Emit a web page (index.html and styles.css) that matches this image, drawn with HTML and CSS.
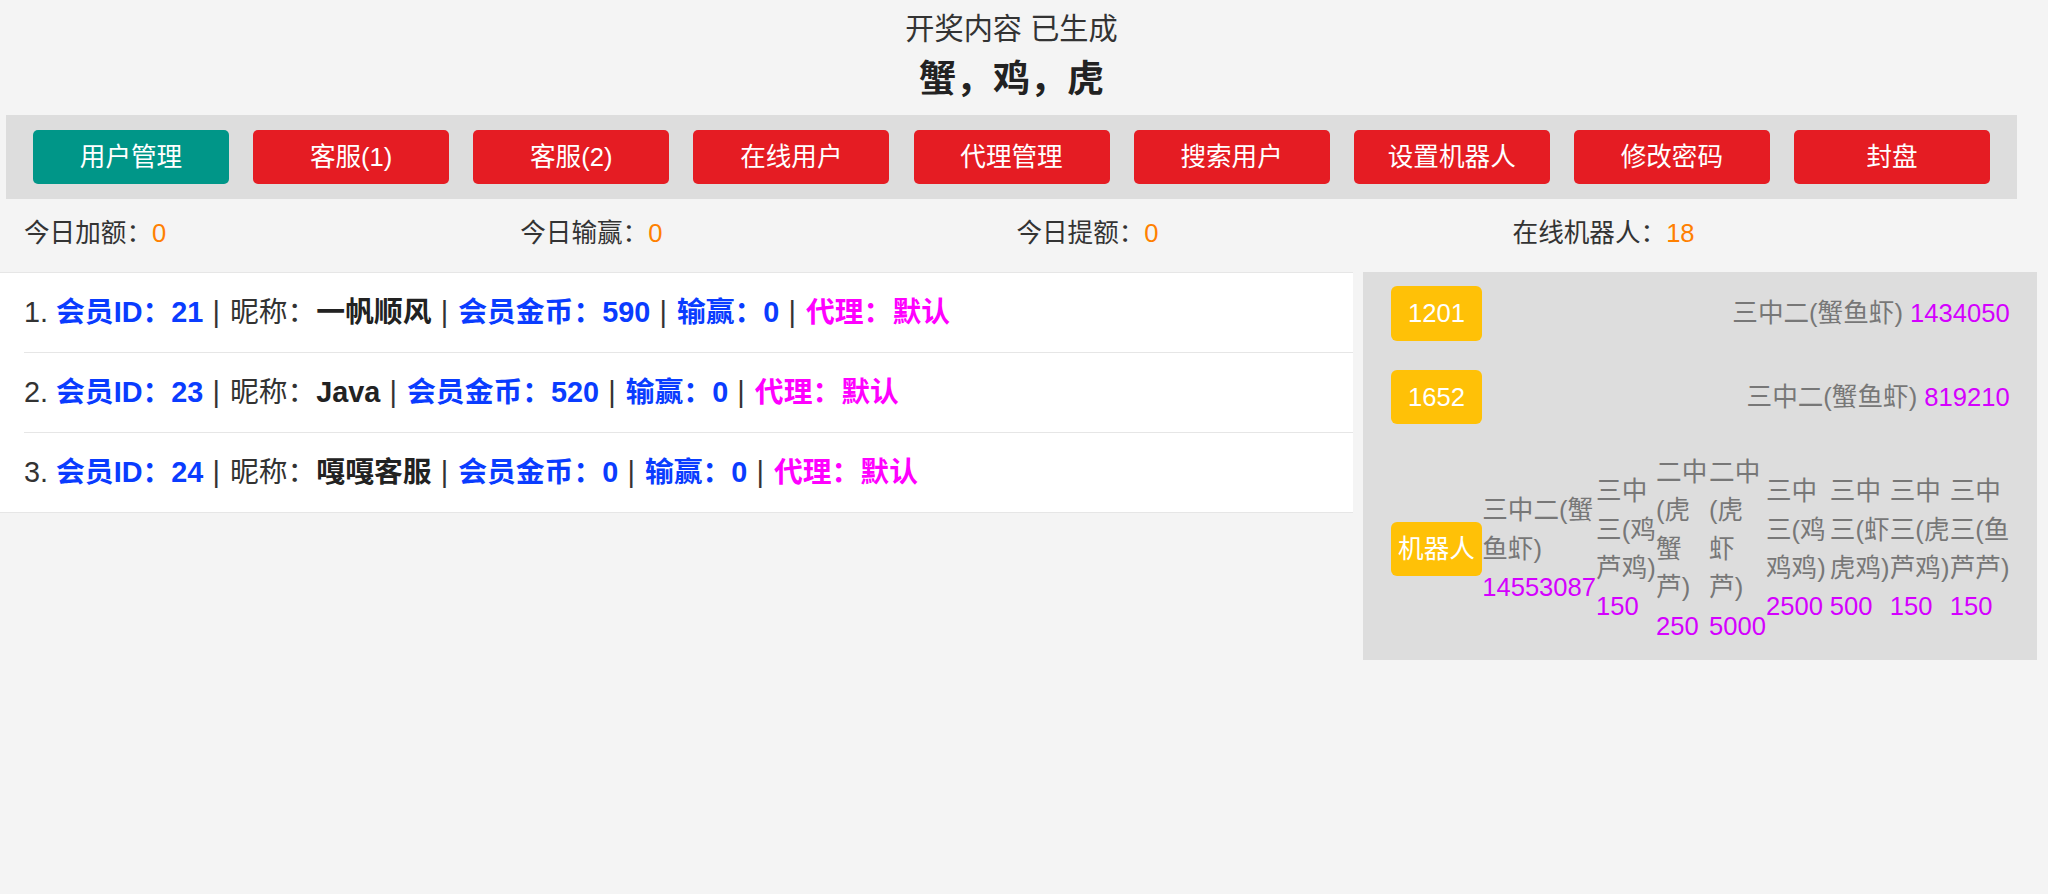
FILE: index.html
```html
<!DOCTYPE html>
<html lang="zh-CN">
<head>
<meta charset="utf-8">
<title>开奖内容</title>
<link rel="stylesheet" href="styles.css">
</head>
<body>
<div class="top">
  <div class="title">开奖内容 已生成</div>
  <div class="result">蟹，鸡，虎</div>
  <nav class="toolbar">
    <a class="btn green">用户管理</a>
    <a class="btn">客服(1)</a>
    <a class="btn">客服(2)</a>
    <a class="btn">在线用户</a>
    <a class="btn">代理管理</a>
    <a class="btn">搜索用户</a>
    <a class="btn">设置机器人</a>
    <a class="btn">修改密码</a>
    <a class="btn">封盘</a>
  </nav>
</div>
<div class="stats">
  <div class="stat">今日加额：<span class="v">0</span></div>
  <div class="stat">今日输赢：<span class="v">0</span></div>
  <div class="stat">今日提额：<span class="v">0</span></div>
  <div class="stat">在线机器人：<span class="v">18</span></div>
</div>
<div class="main">
  <ul class="list">
    <li>1. <b class="blue">会员ID：21</b><span class="sep">|</span>昵称：<b class="dark">一帆顺风</b><span class="sep">|</span><b class="blue">会员金币：590</b><span class="sep">|</span><b class="blue">输赢：0</b><span class="sep">|</span><b class="pink">代理：默认</b></li>
    <li>2. <b class="blue">会员ID：23</b><span class="sep">|</span>昵称：<b class="dark">Java</b><span class="sep">|</span><b class="blue">会员金币：520</b><span class="sep">|</span><b class="blue">输赢：0</b><span class="sep">|</span><b class="pink">代理：默认</b></li>
    <li>3. <b class="blue">会员ID：24</b><span class="sep">|</span>昵称：<b class="dark">嘎嘎客服</b><span class="sep">|</span><b class="blue">会员金币：0</b><span class="sep">|</span><b class="blue">输赢：0</b><span class="sep">|</span><b class="pink">代理：默认</b></li>
  </ul>
  <div class="panel">
    <div class="prow">
      <span class="badge">1201</span>
      <span class="item">三中二(蟹鱼虾) <span class="num">1434050</span></span>
    </div>
    <div class="prow">
      <span class="badge">1652</span>
      <span class="item">三中二(蟹鱼虾) <span class="num">819210</span></span>
    </div>
    <div class="prow">
      <span class="badge">机器人</span>
      <span class="item">三中二(蟹鱼虾) <span class="num">14553087</span></span>
      <span class="item">三中三(鸡芦鸡) <span class="num">150</span></span>
      <span class="item">二中(虎蟹芦) <span class="num">250</span></span>
      <span class="item">二中(虎虾芦) <span class="num">5000</span></span>
      <span class="item">三中三(鸡鸡鸡) <span class="num">2500</span></span>
      <span class="item">三中三(虾虎鸡) <span class="num">500</span></span>
      <span class="item">三中三(虎芦鸡) <span class="num">150</span></span>
      <span class="item">三中三(鱼芦芦) <span class="num">150</span></span>
    </div>
  </div>
</div>
</body>
</html>
```

FILE: styles.css
```css
body {
  margin: 0;
  padding-top: 8px;
  background: #f4f4f4;
  font-family: "Liberation Sans", "Noto Sans CJK SC", sans-serif;
  line-height: 1.5;
  color: #333;
}

.top {
  margin-left: 6px;
  width: 2011px;
}

.title {
  text-align: center;
  font-size: 29.2px;
  color: #333;
}

.result {
  text-align: center;
  font-size: 37px;
  font-weight: bold;
  color: #222;
  line-height: 55px;
}

.toolbar {
  margin-top: 8.2px;
  background: #ddd;
  padding: 15px 27px;
  display: flex;
  justify-content: space-between;
}

.btn {
  width: 196px;
  padding: 8px 0;
  text-align: center;
  font-size: 25.6px;
  color: #fff;
  background: #e51c23;
  border-radius: 5px;
}

.btn.green {
  background: #009688;
}

.stats {
  display: grid;
  grid-template-columns: repeat(4, 496.2px);
  padding: 15px 0 19px 24px;
  font-size: 25.6px;
  color: #333;
}

.stat .v {
  color: #ff8000;
}

.main {
  display: flex;
  align-items: flex-start;
}

.list {
  width: 1353px;
  flex: none;
  margin: 0;
  padding: 0;
  list-style: none;
  background: #fff;
  border-top: 1px solid #e6e6e6;
  border-bottom: 1px solid #e6e6e6;
  font-size: 28.8px;
  color: #333;
}

.list li {
  margin-left: 24px;
  padding: 18px 0;
  white-space: nowrap;
}

.list li + li {
  border-top: 1px solid #e6e6e6;
}

.sep {
  margin: 0 10px 0 9.2px;
  color: #333;
}

.blue {
  color: #0a3cff;
}

.dark {
  color: #222;
}

.pink {
  color: #ff00ff;
}

.panel {
  margin-left: 9.7px;
  width: 674px;
  flex: none;
  box-sizing: border-box;
  padding: 0 27px 0 28px;
  background: #ddd;
  font-size: 25.6px;
  color: #777;
}

.prow {
  display: flex;
  justify-content: space-between;
  align-items: center;
  padding: 14.5px 0;
}

.badge {
  flex: none;
  width: 91.5px;
  padding: 8px 0;
  text-align: center;
  white-space: nowrap;
  background: #ffc107;
  color: #fff;
  border-radius: 6px;
}

.num {
  color: #d400ff;
}
```
